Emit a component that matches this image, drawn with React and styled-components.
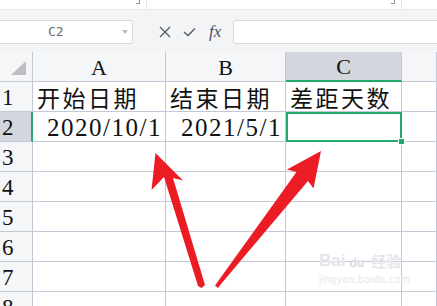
import styled, { createGlobalStyle } from "styled-components";

const GlobalStyle = createGlobalStyle`
  html, body {
    margin: 0;
    padding: 0;
    background: #fff;
    overflow: hidden;
  }
  * {
    box-sizing: border-box;
  }
`;

const Page = styled.div`
  position: relative;
  width: 437px;
  height: 306px;
  overflow: hidden;
  font-family: "Liberation Serif", "Noto Sans CJK SC", serif;
  background: #fff;
`;

const TopStrip = styled.div`
  height: 10px;
  display: flex;
  border-bottom: 1px solid #e6e8ec;
  background: #fff;
`;

const StripBox = styled.div`
  width: ${(p) => p.$w}px;
  flex: ${(p) => (p.$grow ? 1 : "none")};
  border-right: ${(p) => (p.$grow ? "none" : "1px solid #e3e5e9")};
  display: flex;
  justify-content: flex-end;
  padding-right: ${(p) => p.$pad || 0}px;
`;

const CornerMark = styled.span`
  width: 4px;
  height: 4px;
  border-right: 1px solid #8a93a8;
  border-bottom: 1px solid #8a93a8;
`;

const Toolbar = styled.div`
  height: 42px;
  background: #f3f4f6;
  display: flex;
  align-items: center;
  padding-top: 1px;
`;

const NameBox = styled.div`
  width: 137px;
  height: 24px;
  margin-left: -4px;
  background: #fff;
  border: 1px solid #d6d9df;
  border-radius: 3px;
  display: flex;
  align-items: center;
  padding-left: 51px;
  padding-right: 4px;
  font-family: "DejaVu Sans Mono", monospace;
  font-size: 13px;
  color: #6a6d73;
`;

const NameText = styled.span`
  flex: 1;
`;

const DropArrow = styled.span`
  width: 0;
  height: 0;
  border-left: 3px solid transparent;
  border-right: 3px solid transparent;
  border-top: 4px solid #b8bcc4;
`;

const Tools = styled.div`
  display: flex;
  align-items: center;
  gap: 12px;
  margin-left: 26px;
  width: 74px;
`;

const Fx = styled.span`
  font-family: "Liberation Serif", serif;
  font-style: italic;
  font-size: 17px;
  color: #4a5060;
  margin-left: 1px;
`;

const FormulaInput = styled.div`
  flex: 1;
  height: 24px;
  margin-right: -6px;
  background: #fff;
  border: 1px solid #d6d9df;
  border-radius: 3px;
`;

const Sheet = styled.div`
  display: grid;
  grid-template-columns: 33px 133px 120px 116px 1fr;
  grid-auto-rows: 30px;
  background: #fff;
`;

const Cell = styled.div`
  border-right: 1px solid #c3c8d6;
  border-bottom: 1px solid #c3c8d6;
  display: flex;
  align-items: center;
  justify-content: ${(p) => p.$align || "flex-start"};
  padding: 0 3px 0 4px;
  font-size: 25px;
  line-height: 1;
  color: #111;
  white-space: nowrap;
`;

const CjkCell = styled(Cell)`
  font-family: "Noto Sans CJK SC", sans-serif;
  font-size: 23px;
  letter-spacing: 2.5px;
  padding-top: 1px;
  padding-right: 0;
`;

const DateCell = styled(Cell)`
  letter-spacing: 1.5px;
  padding-right: 3px;
  padding-top: 2px;
`;

const ColHead = styled.div`
  border-right: 1px solid #c3c8d6;
  border-bottom: ${(p) => (p.$active ? "2px solid #1faa6b" : "1px solid #c3c8d6")};
  background: ${(p) => (p.$active ? "#d3d6dd" : "#f5f6f8")};
  display: flex;
  align-items: center;
  justify-content: center;
  font-size: 22px;
  line-height: 1;
  padding-top: 2px;
  color: #111;
`;

const RowHead = styled.div`
  border-right: ${(p) => (p.$active ? "2px solid #1faa6b" : "1px solid #c3c8d6")};
  border-bottom: 1px solid #c3c8d6;
  background: ${(p) => (p.$active ? "#d3d6dd" : "#f5f6f8")};
  display: flex;
  align-items: center;
  padding-left: 2px;
  padding-top: 1px;
  font-size: 23px;
  line-height: 1;
  color: #111;
`;

const Corner = styled.div`
  border-right: 1px solid #c3c8d6;
  border-bottom: 1px solid #c3c8d6;
  background: #f5f6f8;
  position: relative;
`;

const CornerTriangle = styled.span`
  position: absolute;
  left: 11px;
  bottom: 6px;
  width: 0;
  height: 0;
  border-left: 15px solid transparent;
  border-bottom: 14px solid #bcbec3;
`;

const ActiveCell = styled(Cell)`
  position: relative;
  border: none;
  box-shadow: inset 0 0 0 2px #1faa6b;
`;

const FillHandle = styled.span`
  position: absolute;
  right: -3px;
  bottom: -3px;
  width: 5px;
  height: 5px;
  background: #1faa6b;
  border: 1px solid #fff;
  box-sizing: content-box;
`;

const Overlay = styled.svg`
  position: absolute;
  left: 0;
  top: 0;
  pointer-events: none;
`;

const Watermark = styled.div`
  position: absolute;
  left: 319px;
  top: 250px;
  display: flex;
  flex-direction: column;
  color: #e4e6ea;
  text-shadow: 0 0 1px #fff;
  pointer-events: none;
`;

const WmTop = styled.div`
  display: flex;
  align-items: flex-end;
  gap: 1px;
  font-family: "Liberation Sans", sans-serif;
  font-weight: bold;
  font-size: 17px;
  line-height: 18px;
`;

const WmPaw = styled.span`
  font-size: 12px;
  line-height: 14px;
  padding: 6px 3px 0;
  color: #d8dbe0;
`;

const WmCjk = styled.span`
  font-family: "Noto Sans CJK SC", sans-serif;
  font-size: 15px;
  line-height: 18px;
  margin-left: 3px;
`;

const WmUrl = styled.div`
  font-family: "Liberation Sans", sans-serif;
  font-size: 10px;
  letter-spacing: 0.6px;
  margin-top: 4px;
`;

const rows = [
  { n: 1, a: "开始日期", b: "结束日期", c: "差距天数", cjk: true },
  { n: 2, a: "2020/10/1", b: "2021/5/1", c: "", active: true },
  { n: 3 },
  { n: 4 },
  { n: 5 },
  { n: 6 },
  { n: 7 },
  { n: 8 },
];

const Row = ({ r }) => {
  if (r.cjk) {
    return (
      <>
        <RowHead>{r.n}</RowHead>
        <CjkCell>{r.a}</CjkCell>
        <CjkCell>{r.b}</CjkCell>
        <CjkCell>{r.c}</CjkCell>
        <Cell />
      </>
    );
  }
  if (r.active) {
    return (
      <>
        <RowHead $active>{r.n}</RowHead>
        <DateCell $align="flex-end">{r.a}</DateCell>
        <DateCell $align="flex-end">{r.b}</DateCell>
        <ActiveCell>
          <FillHandle />
        </ActiveCell>
        <Cell />
      </>
    );
  }
  return (
    <>
      <RowHead>{r.n}</RowHead>
      <Cell />
      <Cell />
      <Cell />
      <Cell />
    </>
  );
};

const App = () => {
  return (
    <Page>
      <GlobalStyle />
      <TopStrip>
        <StripBox $w={147} $pad={6}>
          <CornerMark />
        </StripBox>
        <StripBox $w={255} $pad={6}>
          <CornerMark />
        </StripBox>
        <StripBox $grow />
      </TopStrip>
      <Toolbar>
        <NameBox>
          <NameText>C2</NameText>
          <DropArrow />
        </NameBox>
        <Tools>
          <svg width="12" height="12" viewBox="0 0 12 12">
            <path d="M1 1 L11 11 M11 1 L1 11" stroke="#555b68" strokeWidth="1.3" fill="none" />
          </svg>
          <svg width="13" height="10" viewBox="0 0 13 10">
            <path d="M1 5 L5 8.5 L12 1.5" stroke="#555b68" strokeWidth="1.4" fill="none" />
          </svg>
          <Fx>fx</Fx>
        </Tools>
        <FormulaInput />
      </Toolbar>
      <Sheet>
        <Corner>
          <CornerTriangle />
        </Corner>
        <ColHead>A</ColHead>
        <ColHead>B</ColHead>
        <ColHead $active>C</ColHead>
        <ColHead />
        {rows.map((r) => (
          <Row key={r.n} r={r} />
        ))}
      </Sheet>
      <Overlay width="437" height="306" viewBox="0 0 437 306">
        <polygon
          points="155.5,153 183,180.5 173,178 205,285 201.5,288 198,286 164,177 151.5,190"
          fill="#ec1c24"
        />
        <polygon
          points="321,151 313.5,188.5 308,181 221,284 218,288 215,285.5 296.5,172 287,169.5"
          fill="#ec1c24"
        />
      </Overlay>
      <Watermark>
        <WmTop>
          <span>Bai</span>
          <WmPaw>du</WmPaw>
          <WmCjk>经验</WmCjk>
        </WmTop>
        <WmUrl>jingyan.baidu.com</WmUrl>
      </Watermark>
    </Page>
  );
};

export default App;
